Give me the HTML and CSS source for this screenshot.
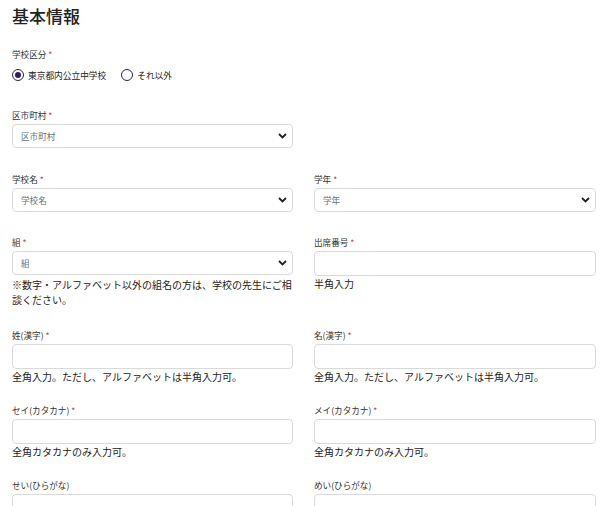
FILE: index.html
```html
<!DOCTYPE html>
<html lang="ja">
<head>
<meta charset="utf-8">
<link rel="stylesheet" href="styles.css">
</head>
<body>
<div class="page">
  <h1 class="title">基本情報</h1>

  <div class="label first-label">学校区分 <span class="req">*</span></div>
  <div class="radios">
    <label class="radio"><span class="dot checked"></span>東京都内公立中学校</label>
    <label class="radio"><span class="dot"></span>それ以外</label>
  </div>

  <div class="single">
    <div class="label">区市町村 <span class="req">*</span></div>
    <div class="select"><span>区市町村</span><svg class="chev" width="9" height="6" viewBox="0 0 9 6"><path d="M1 1 L4.5 4.5 L8 1" fill="none" stroke="#222" stroke-width="1.8"/></svg></div>
  </div>

  <div class="grid">
    <div class="field">
      <div class="label">学校名 <span class="req">*</span></div>
      <div class="select"><span>学校名</span><svg class="chev" width="9" height="6" viewBox="0 0 9 6"><path d="M1 1 L4.5 4.5 L8 1" fill="none" stroke="#222" stroke-width="1.8"/></svg></div>
    </div>
    <div class="field">
      <div class="label">学年 <span class="req">*</span></div>
      <div class="select"><span>学年</span><svg class="chev" width="9" height="6" viewBox="0 0 9 6"><path d="M1 1 L4.5 4.5 L8 1" fill="none" stroke="#222" stroke-width="1.8"/></svg></div>
    </div>

    <div class="field">
      <div class="label">組 <span class="req">*</span></div>
      <div class="select"><span>組</span><svg class="chev" width="9" height="6" viewBox="0 0 9 6"><path d="M1 1 L4.5 4.5 L8 1" fill="none" stroke="#222" stroke-width="1.8"/></svg></div>
      <div class="help note">※数字・アルファベット以外の組名の方は、学校の先生にご相談ください。</div>
    </div>
    <div class="field">
      <div class="label">出席番号 <span class="req">*</span></div>
      <div class="input"></div>
      <div class="help">半角入力</div>
    </div>

    <div class="field">
      <div class="label">姓(漢字) <span class="req">*</span></div>
      <div class="input"></div>
      <div class="help">全角入力。ただし、アルファベットは半角入力可。</div>
    </div>
    <div class="field">
      <div class="label">名(漢字) <span class="req">*</span></div>
      <div class="input"></div>
      <div class="help">全角入力。ただし、アルファベットは半角入力可。</div>
    </div>

    <div class="field">
      <div class="label">セイ(カタカナ) <span class="req">*</span></div>
      <div class="input"></div>
      <div class="help">全角カタカナのみ入力可。</div>
    </div>
    <div class="field">
      <div class="label">メイ(カタカナ) <span class="req">*</span></div>
      <div class="input"></div>
      <div class="help">全角カタカナのみ入力可。</div>
    </div>

    <div class="field">
      <div class="label">せい(ひらがな)</div>
      <div class="input"></div>
    </div>
    <div class="field">
      <div class="label">めい(ひらがな)</div>
      <div class="input"></div>
    </div>
  </div>
</div>
</body>
</html>
```
FILE: styles.css
```css
html, body {
  margin: 0;
  padding: 0;
  background: #fff;
}
body {
  font-family: "Noto Sans CJK JP", "Noto Sans", sans-serif;
  color: #333;
  overflow: hidden;
}
.page {
  padding: 4px 4px 0 12px;
}
.title {
  margin: 0;
  font-size: 17px;
  line-height: 24px;
  font-weight: 500;
  color: #222;
}
.label {
  font-size: 8.6px;
  line-height: 12px;
  color: #333;
  margin-bottom: 3px;
}
.req {
  color: #c8353b;
}
.first-label {
  margin-top: 20px;
  margin-bottom: 8px;
}
.radios {
  display: flex;
  align-items: center;
  gap: 15px;
  height: 14px;
}
.radio {
  display: flex;
  align-items: center;
  gap: 4px;
  font-size: 8.7px;
  color: #222;
}
.dot {
  box-sizing: border-box;
  width: 12px;
  height: 12px;
  border: 1.6px solid #2b1d5f;
  border-radius: 50%;
  display: flex;
  align-items: center;
  justify-content: center;
}
.dot.checked::after {
  content: "";
  width: 6px;
  height: 6px;
  border-radius: 50%;
  background: #2b1d5f;
}
.single {
  width: 281px;
  margin-top: 27px;
}
.select, .input {
  box-sizing: border-box;
  height: 24px;
  border: 1px solid #dadada;
  border-radius: 4px;
  background: #fff;
}
.select {
  display: flex;
  align-items: center;
  justify-content: space-between;
  padding: 0 5px 0 8px;
  font-size: 8.6px;
  color: #6a6f78;
}
.input {
  height: 25px;
}
.grid {
  display: grid;
  grid-template-columns: 281px 282px;
  column-gap: 21px;
  row-gap: 24px;
  margin-top: 25px;
}
.help {
  font-size: 10px;
  line-height: 15px;
  color: #222;
  margin-bottom: -4px;
}
.help.note {
  margin-top: 2px;
  margin-bottom: -2px;
}
```
